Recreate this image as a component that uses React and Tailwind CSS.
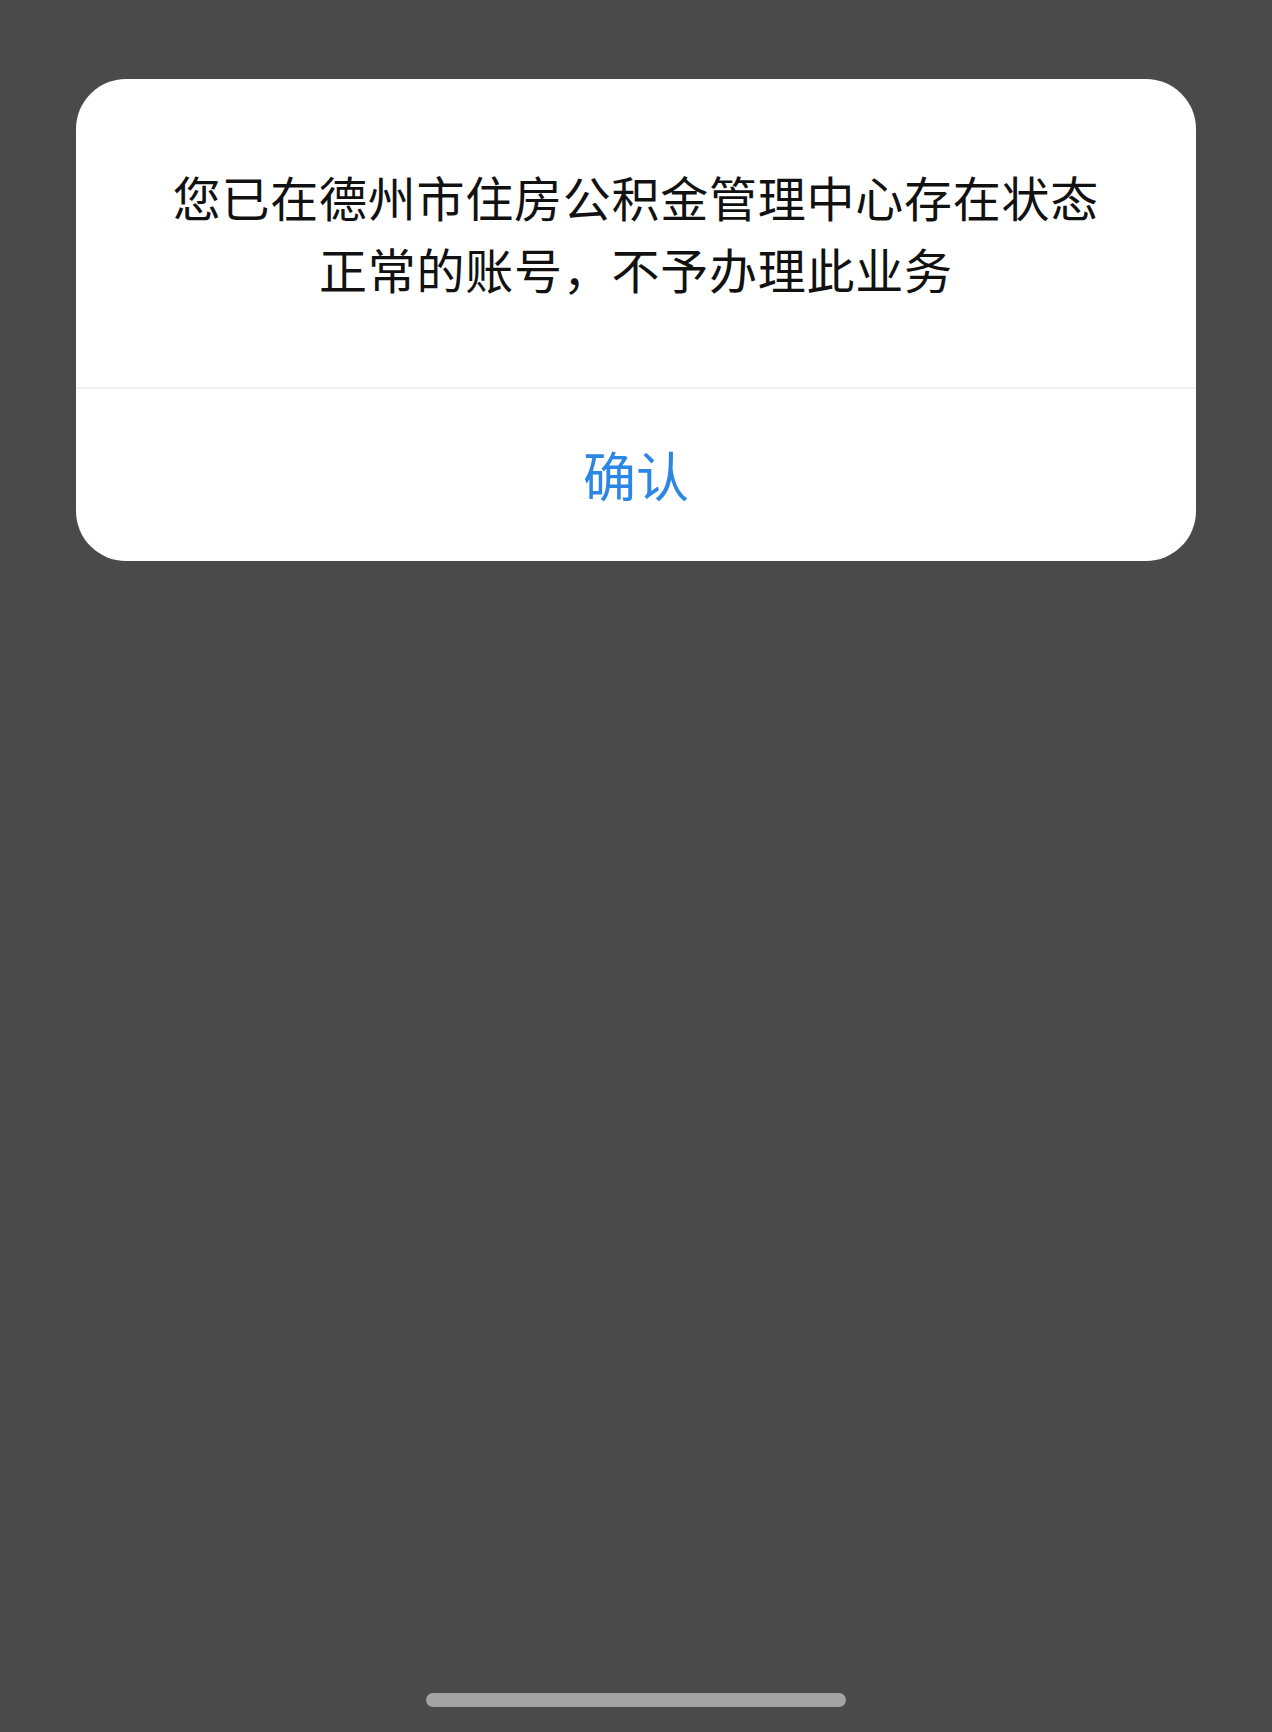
import React from "react";

const App = () => {
  return (
    <div
      className="min-h-[1732px] h-[1732px] w-full bg-[#4a4a4a] flex flex-col"
      style={{ fontFamily: '"Noto Sans CJK SC", "Noto Sans", sans-serif' }}
    >
      {/* dialog */}
      <div className="mx-[76px] mt-[79px] rounded-[50px] bg-white overflow-hidden">
        <div className="pt-[81px] pb-[83px] px-10 text-center text-[48px] leading-[72px] tracking-[0.75px] text-[#111111]">
          <p>您已在德州市住房公积金管理中心存在状态</p>
          <p>正常的账号，不予办理此业务</p>
        </div>
        <div className="h-[2px] bg-[#eef0f2]" />
        <button
          type="button"
          className="w-full h-[172px] flex items-center justify-center text-[53px] text-[#2b87e3]"
        >
          确认
        </button>
      </div>

      <div className="flex-1" />

      {/* home indicator */}
      <div className="flex justify-center pb-[25px]">
        <div className="w-[420px] h-[14px] rounded-full bg-[#a4a4a4]" />
      </div>
    </div>
  );
};

export default App;
